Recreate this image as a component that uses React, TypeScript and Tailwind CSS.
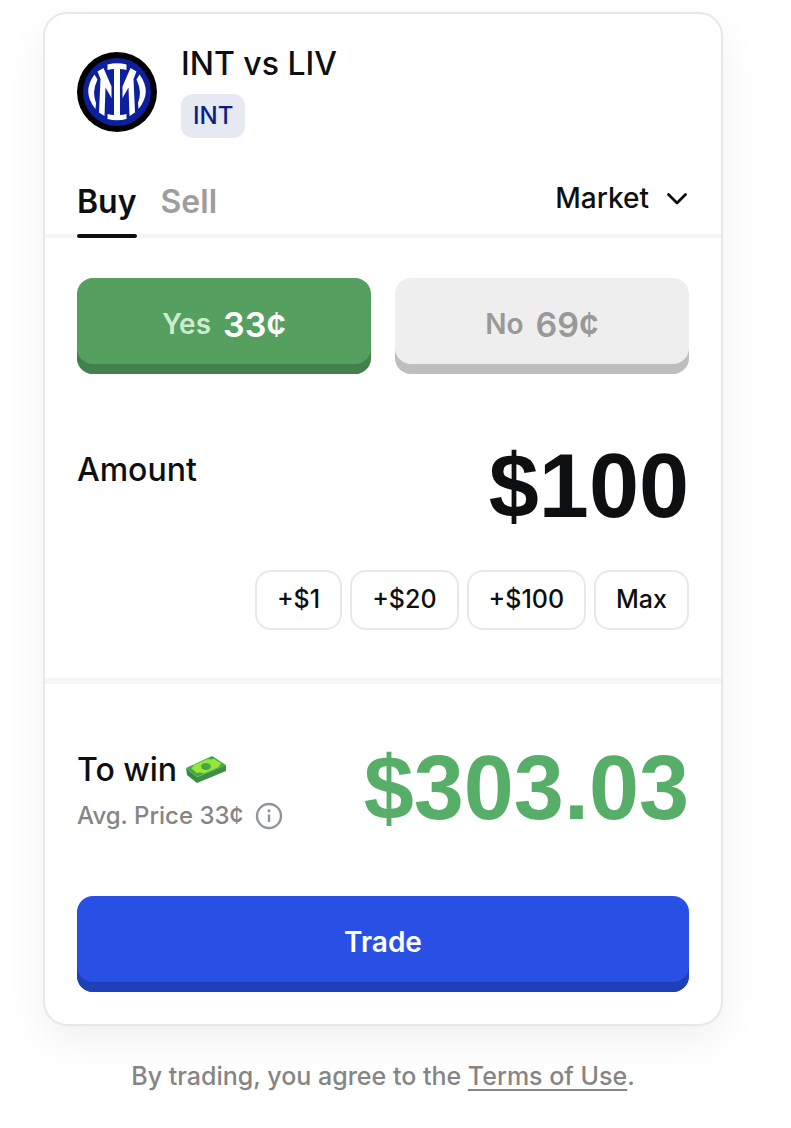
import { useState, type ChangeEvent } from "react";

const quickAmounts = [
    { label: "+$1", value: 1 },
    { label: "+$20", value: 20 },
    { label: "+$100", value: 100 },
];

const InterLogo = () => (
    <svg viewBox="0 0 80 80" className="size-20 shrink-0" role="img" aria-label="Inter">
        <circle cx="40" cy="40" r="40" fill="#000" />
        <circle cx="40" cy="40" r="34" fill="#0c1f9c" />
        <g fill="#fff">
            <path d="M30.500 12.500Q40 10 49.500 12.500V18Q46 17 43 17V63Q46 63 49.500 62V67Q40 69.500 30.500 67V62Q34 63 37 63V17Q34 17 30.500 18Z" />
            <path d="M20.500 19.500L26.500 16L34.500 34.500V46L28.500 35.500L27.500 64L22 60.500L23.500 27Z" />
            <path d="M59.500 19.500L53.500 16L45.500 34.500V46L51.500 35.500L52.500 64L58 60.500L56.500 27Z" />
            <path d="M17.500 22.500L20.500 27.500Q14.500 40 19 51L18.500 57Q4.500 40 17.500 22.500Z" />
            <path d="M62.500 22.500L59.500 27.500Q65.500 40 61 51L61.500 57Q75.500 40 62.500 22.500Z" />
        </g>
    </svg>
);

const CashIcon = () => (
    <svg viewBox="0 0 42 30" className="h-[30px] w-[42px]" aria-hidden="true">
        <path d="M1 13L12 22V28L2 20Z" fill="#2f8f3c" />
        <path d="M12 22L41 10V16L12 28Z" fill="#3f8f45" />
        <path d="M1 13L27 1L41 10L12 22Z" fill="#45a648" />
        <path d="M6 13Q9 11.500 8.500 10L23 4Q26 5 29 3.800L36.500 8.800Q33.500 10.500 34 12L18.500 18.500Q15.500 17 11.500 18Z" fill="#97e63c" />
        <ellipse cx="21" cy="11.500" rx="5" ry="3.500" fill="#45a648" />
    </svg>
);

const App = () => {
    const [tab, setTab] = useState("Buy");
    const [amount, setAmount] = useState(100);
    const [orderType, setOrderType] = useState("Market");

    function onChange(e: ChangeEvent<HTMLInputElement>) {
        setAmount(Number(e.target.value.replace(/\D/g, "")));
    }

    return (
        <main className="bg-white pt-3 pr-[68px] pb-8 pl-[43px] font-['Inter',sans-serif] font-medium text-[#0e0f11]">
            <section className="rounded-3xl border-2 border-[#e8e8e8] bg-white shadow-[0_16px_40px_rgba(0,0,0,0.06)]">
                <header className="flex items-center gap-6 px-8 pt-8">
                    <InterLogo />
                    <div className="flex flex-col items-start gap-3">
                        <h1 className="text-[32px] leading-9">INT vs LIV</h1>
                        <span className="rounded-xl bg-[#e6e8f2] px-3 text-2xl leading-11 text-[#0b1f85]">INT</span>
                    </div>
                </header>

                <div className="mt-9 flex items-start justify-between border-b-4 border-[#f5f5f5] px-8">
                    <div className="-mb-1 flex gap-6">
                        {["Buy", "Sell"].map((name) => (
                            <button
                                key={name}
                                onClick={() => setTab(name)}
                                className={
                                    tab === name
                                        ? "flex flex-col pt-1 text-[32px] leading-12 font-semibold"
                                        : "flex flex-col pt-1 text-[32px] leading-12 font-semibold text-[#9d9d9d]"
                                }
                            >
                                {name}
                                <span className={tab === name ? "mt-2 h-1 w-full rounded-sm bg-[#0e0f11]" : "mt-2 h-1"} />
                            </button>
                        ))}
                    </div>
                    <label className="flex items-center gap-4">
                        <select
                            aria-label="Order type"
                            value={orderType}
                            onChange={(e) => setOrderType(e.target.value)}
                            className="field-sizing-content h-12 appearance-none bg-transparent text-[28px]"
                        >
                            <option>Market</option>
                            <option>Limit</option>
                        </select>
                        <svg viewBox="0 0 24 24" className="size-6" fill="none" stroke="currentColor" strokeWidth="2.800" strokeLinecap="round" strokeLinejoin="round" aria-hidden="true">
                            <path d="M3.500 8.500L12 17L20.500 8.500" />
                        </svg>
                    </label>
                </div>

                <div className="px-8 pt-10">
                    <div className="grid grid-cols-2 gap-6">
                        <button className="flex h-24 items-center justify-center gap-3 rounded-2xl bg-[#559f5f] pb-1 font-semibold text-white shadow-[inset_0_-10px_0_#43804c]">
                            <span className="text-[28px] text-[#cdebcf]">Yes</span>
                            <span className="text-[34px]">33¢</span>
                        </button>
                        <button className="flex h-24 items-center justify-center gap-3 rounded-2xl bg-[#eeeeee] pb-1 font-semibold text-[#999999] shadow-[inset_0_-10px_0_#bebebe]">
                            <span className="text-[28px]">No</span>
                            <span className="text-[34px]">69¢</span>
                        </button>
                    </div>

                    <div className="mt-16 flex items-start justify-between">
                        <label htmlFor="amount" className="mt-3 text-[32px] leading-10">Amount</label>
                        <input
                            id="amount"
                            type="text"
                            inputMode="numeric"
                            value={`$${amount}`}
                            onChange={onChange}
                            className="field-sizing-content h-24 text-right font-['Liberation_Sans',sans-serif] text-[90px] font-bold outline-none"
                        />
                    </div>

                    <div className="mt-9 flex justify-end gap-2 text-[25px]">
                        {quickAmounts.map(({ label, value }) => (
                            <button
                                key={label}
                                onClick={() => setAmount((prev) => prev + value)}
                                className="h-15 rounded-2xl border-2 border-[#e8e8e8] px-5"
                            >
                                {label}
                            </button>
                        ))}
                        <button className="h-15 rounded-2xl border-2 border-[#e8e8e8] px-5">Max</button>
                    </div>
                </div>

                <div className="mt-12 border-t-6 border-[#f3f5f7] px-8 pt-14 pb-8">
                    <div className="flex items-center justify-between">
                        <div className="flex flex-col gap-2 pt-2">
                            <p className="flex items-center gap-2 text-[32px] leading-10">
                                To win
                                <CashIcon />
                            </p>
                            <p className="flex items-center gap-3 text-2xl leading-9 text-[#858585]">
                                Avg. Price 33¢
                                <svg viewBox="0 0 28 28" className="size-7" fill="none" stroke="#9094a0" strokeWidth="2.400" aria-hidden="true">
                                    <circle cx="14" cy="14" r="12" />
                                    <path d="M14 12.500V20" />
                                    <circle cx="14" cy="8.800" r="1.600" fill="#9094a0" stroke="none" />
                                </svg>
                            </p>
                        </div>
                        <p className="font-['Liberation_Sans',sans-serif] text-[90px] leading-24 font-bold text-[#57ae68]">$303.03</p>
                    </div>
                    <button className="mt-15 flex h-24 w-full items-center justify-center rounded-2xl bg-[#2850e5] pb-1 text-[28px] font-semibold text-white shadow-[inset_0_-10px_0_#2040b8]">
                        Trade
                    </button>
                </div>
            </section>

            <p className="mt-8 text-center text-[25px] leading-9 text-[#858585]">
                By trading, you agree to the{" "}
                <a href="#" className="underline decoration-2 underline-offset-4">Terms of Use</a>.
            </p>
        </main>
    );
};

export default App;
